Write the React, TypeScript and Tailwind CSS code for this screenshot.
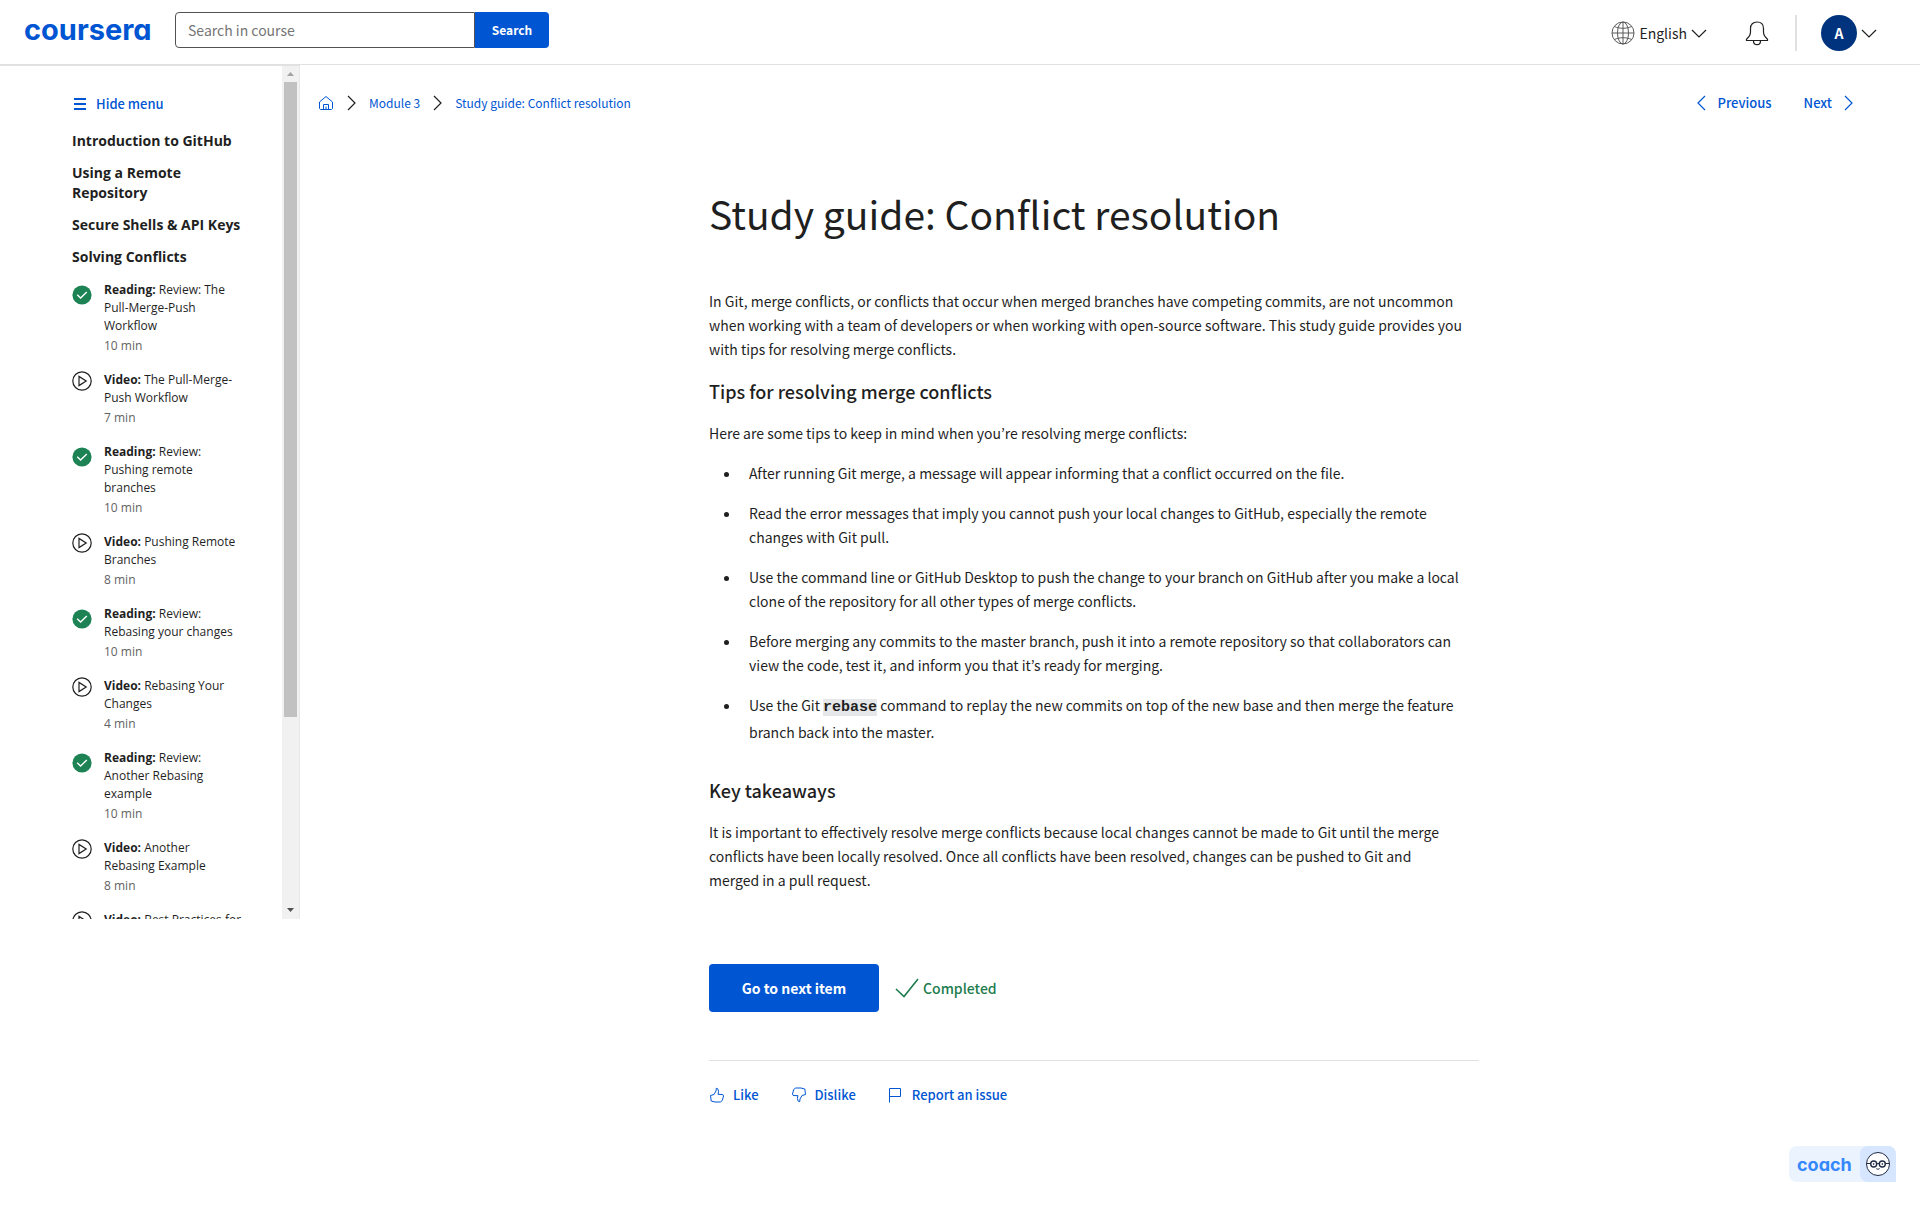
import React from "react";

const Chevron = ({ d, className }: { d: "left" | "right" | "down"; className?: string }) => {
  const paths = { left: "M8 2L1 9l7 7", right: "M1 2l7 7-7 7", down: "M1 1l7 7 7-7" };
  return (
    <svg
      width={d === "down" ? 16 : 9}
      height={d === "down" ? 9 : 18}
      viewBox={d === "down" ? "0 0 16 9" : "0 0 9 18"}
      fill="none"
      stroke="currentColor"
      strokeWidth="1.2"
      className={className}
      aria-hidden="true"
    >
      <path d={paths[d]} />
    </svg>
  );
};

type Item = { kind: "Reading" | "Video"; title: string; min: number };

const sections = ["Introduction to GitHub", "Using a Remote Repository", "Secure Shells & API Keys", "Solving Conflicts"];

const items: Item[] = [
  { kind: "Reading", title: "Review: The Pull-Merge-Push Workflow", min: 10 },
  { kind: "Video", title: "The Pull-Merge-Push Workflow", min: 7 },
  { kind: "Reading", title: "Review: Pushing remote branches", min: 10 },
  { kind: "Video", title: "Pushing Remote Branches", min: 8 },
  { kind: "Reading", title: "Review: Rebasing your changes", min: 10 },
  { kind: "Video", title: "Rebasing Your Changes", min: 4 },
  { kind: "Reading", title: "Review: Another Rebasing example", min: 10 },
  { kind: "Video", title: "Another Rebasing Example", min: 8 },
  { kind: "Video", title: "Best Practices for Collaboration", min: 5 },
];

const CheckCircle = () => (
  <svg width="20" height="20" viewBox="0 0 20 20" className="mt-1 shrink-0" aria-hidden="true">
    <circle cx="10" cy="10" r="9.6" fill="#1d8354" />
    <path d="M5.2 9.8l3.4 3.3 6.2-6.2" fill="none" stroke="#fff" strokeWidth="1.4" />
  </svg>
);

const PlayCircle = () => (
  <svg
    width="20"
    height="20"
    viewBox="0 0 20 20"
    className="shrink-0"
    fill="none"
    stroke="#1f1f1f"
    strokeWidth="1.2"
    aria-hidden="true"
  >
    <circle cx="10" cy="10" r="9.2" />
    <path d="M7 5.4v9.2l7.2-4.6z" />
  </svg>
);

const Header = () => (
  <header className="box-content flex h-16 items-center border-b border-[#e1e1e1] pr-[43px] pl-6">
    <div className="flex items-center pb-1">
      <a
        href="#"
        className="w-[127px] font-['Inter'] text-[29px] leading-8 font-bold text-[#0056d2] [font-feature-settings:'cv11']"
      >
        coursera
      </a>
      <form className="ml-6 flex h-9" onSubmit={(e) => e.preventDefault()}>
        <input
          aria-label="Search in course"
          placeholder="Search in course"
          className="w-[300px] rounded-l border border-[#525252] px-3 text-[14px] outline-none placeholder:text-[#757575]"
        />
        <button className="w-[74px] rounded-r bg-[#0056d2] text-[12px] font-bold text-white">Search</button>
      </form>
    </div>
    <div className="ml-auto flex items-center pt-0.5">
      <button className="flex items-center gap-1 text-[14px]">
        <svg width="24" height="24" viewBox="0 0 24 24" fill="none" stroke="#5a5a5a" aria-hidden="true">
          <circle cx="12" cy="12" r="11" />
          <ellipse cx="12" cy="12" rx="5.5" ry="11" />
          <path d="M1 12h22M12 1v22M3.5 5.5c5 2.4 12 2.4 17 0M3.5 18.500c5-2.400 12-2.400 17 0" />
        </svg>
        English
        <Chevron d="down" />
      </button>
      <button aria-label="Notifications" className="ml-[38px]">
        <svg width="24" height="26" viewBox="0 0 24 26" fill="none" stroke="#1f1f1f" strokeWidth="1.2" aria-hidden="true">
          <path d="M1.500 20.500v-1.300c2.500-2.200 4-4 4-7.200V8.500C5.500 4.500 8 2 12 2s6.500 2.500 6.500 6.500V12c0 3.200 1.500 5 4 7.200v1.300zM8.500 21c0 2.200 1.400 3.700 3.500 3.700s3.500-1.500 3.500-3.700" />
        </svg>
      </button>
      <div className="ml-[26px] h-9 w-0.5 bg-[#e1e1e1]" />
      <button className="ml-6 flex items-center gap-1" aria-label="Account">
        <span className="grid h-9 w-9 place-items-center rounded-full bg-[#00337d] text-[14px] font-bold text-white">A</span>
        <Chevron d="down" />
      </button>
    </div>
  </header>
);

const Sidebar = () => (
  <aside className="flex h-[854px] w-[300px] shrink-0 border-t border-r border-t-[#e1e1e1] border-r-[#e8e8e8]">
    <div className="flex-1 overflow-hidden pt-6 pl-[72px] font-['Open_Sans'] text-[#1f1f1f]">
      <button className="flex h-[27px] items-center gap-2 font-['Noto_Sans_CJK_JP'] text-[13px] font-medium text-[#0056d2]">
        <svg width="16" height="12" viewBox="0 0 16 12" stroke="#0056d2" strokeWidth="2" aria-hidden="true">
          <path d="M2 1h12M2 6h12M2 11h12" />
        </svg>
        Hide menu
      </button>
      <nav className="w-[170px] pt-[14px]">
        {sections.map((s) => (
          <h2 key={s} className="mb-3 text-[14px] leading-5 font-bold">
            {s}
          </h2>
        ))}
        <ul className="flex flex-col gap-4 pt-0.5">
          {items.map((it) => (
            <li key={it.title}>
              <a href="#" className="flex gap-3">
                {it.kind === "Reading" ? <CheckCircle /> : <PlayCircle />}
                <div className="text-[12px] leading-[18px]">
                  <p>
                    <b className="font-bold">{it.kind}:</b> {it.title}
                  </p>
                  <p className="pt-0.5 text-[#636363]">{it.min} min</p>
                </div>
              </a>
            </li>
          ))}
        </ul>
      </nav>
    </div>
    <div className="flex w-[17px] flex-col items-center bg-[#f1f1f1]">
      <svg width="17" height="16" viewBox="0 0 17 16" aria-hidden="true">
        <path d="M5 10h7l-3.500-4z" fill="#a3a3a3" />
      </svg>
      <div className="h-[635px] w-[13px] bg-[#c1c1c1]" />
      <svg width="17" height="17" viewBox="0 0 17 17" className="mt-auto" aria-hidden="true">
        <path d="M5 6h7l-3.500 4z" fill="#505050" />
      </svg>
    </div>
  </aside>
);

const tips: React.ReactNode[] = [
  "After running Git merge, a message will appear informing that a conflict occurred on the file.",
  "Read the error messages that imply you cannot push your local changes to GitHub, especially the remote changes with Git pull.",
  "Use the command line or GitHub Desktop to push the change to your branch on GitHub after you make a local clone of the repository for all other types of merge conflicts.",
  "Before merging any commits to the master branch, push it into a remote repository so that collaborators can view the code, test it, and inform you that it’s ready for merging.",
  <>
    Use the Git <code className="bg-[#e5e7e8] font-['Liberation_Mono'] text-[15px] font-bold">rebase</code> command to replay
    the new commits on top of the new base and then merge the feature branch back into the master.
  </>,
];

const thumb = "M1.500 8.500L5 7.500 7 4l.3-2.700 1.500.5.8 2.700-.6 2.800 4.800.2.700 1.500-1.200 4.500-2 1.500H6L2.200 14z";

const Article = () => (
  <article className="mx-auto w-full max-w-[770px]">
    <h1 className="pt-[74px] text-[39px] leading-[52px]">Study guide: Conflict resolution</h1>
    <p className="pt-[50px] text-[14px] leading-6">
      In Git, merge conflicts, or conflicts that occur when merged branches have competing commits, are not uncommon when
      working with a team of developers or when working with open-source software. This study guide provides you with tips
      for resolving merge conflicts.
    </p>
    <h2 className="pt-[18px] text-[18px] leading-6 font-medium">Tips for resolving merge conflicts</h2>
    <p className="pt-[18px] text-[14px] leading-6">
      Here are some tips to keep in mind when you’re resolving merge conflicts:
    </p>
    <ul className="flex list-disc flex-col gap-4 pt-4 pl-8 text-[14px] leading-6">
      {tips.map((t, i) => (
        <li key={i} className="pl-2">
          {t}
        </li>
      ))}
    </ul>
    <h2 className="pt-[34px] text-[18px] leading-6 font-medium">Key takeaways</h2>
    <p className="pt-[18px] pr-5 text-[14px] leading-6">
      It is important to effectively resolve merge conflicts because local changes cannot be made to Git until the merge
      conflicts have been locally resolved. Once all conflicts have been resolved, changes can be pushed to Git and merged
      in a pull request.
    </p>
    <div className="flex items-center gap-4 pt-[72px]">
      <button className="h-12 w-[170px] rounded bg-[#0056d2] text-[14px] font-bold text-white">Go to next item</button>
      <span className="flex items-center gap-1 text-[14px] font-medium text-[#1d7c4d]">
        <svg
          width="24"
          height="20"
          viewBox="0 0 24 20"
          fill="none"
          stroke="currentColor"
          strokeWidth="1.600"
          aria-hidden="true"
        >
          <path d="M1 11l8 7.500L23 1" />
        </svg>
        Completed
      </span>
    </div>
    <div className="mt-12 flex gap-8 border-t border-[#e1e1e1] pt-6 text-[13px] leading-5 font-medium text-[#0056d2]">
      <button className="flex items-center gap-2">
        <svg width="16" height="16" viewBox="0 0 16 16" fill="none" stroke="currentColor" aria-hidden="true">
          <path d={thumb} strokeLinejoin="round" />
        </svg>
        Like
      </button>
      <button className="flex items-center gap-2">
        <svg width="16" height="16" viewBox="0 0 16 16" fill="none" stroke="currentColor" aria-hidden="true">
          <path d={thumb} strokeLinejoin="round" transform="rotate(180 8 8)" />
        </svg>
        Dislike
      </button>
      <button className="flex items-center gap-2">
        <svg width="16" height="16" viewBox="0 0 16 16" fill="none" stroke="currentColor" aria-hidden="true">
          <path d="M1.500 15.500V1.500h11v8h-11" />
        </svg>
        Report an issue
      </button>
    </div>
  </article>
);

export default function App() {
  return (
    <div className="min-h-screen bg-white font-['Noto_Sans_CJK_JP','Noto_Sans',sans-serif] text-[#1f1f1f]">
      <Header />
      <div className="flex">
        <Sidebar />
        <main className="min-w-0 flex-1">
          <div className="flex items-center pt-7 pr-[67px] pl-[18px] text-[12px] leading-5 text-[#0056d2]">
            <nav aria-label="Breadcrumb" className="flex items-center gap-[13px]">
              <a href="#" aria-label="Home">
                <svg
                  width="16"
                  height="16"
                  viewBox="0 0 16 16"
                  fill="none"
                  stroke="currentColor"
                  strokeLinejoin="round"
                  aria-hidden="true"
                >
                  <path d="M1.500 7L8 1.500 14.500 7v6.500l-1 1h-11l-1-1zM5.500 14.500v-5h5v5M8 11.500v3" />
                </svg>
              </a>
              <Chevron d="right" className="text-[#1f1f1f]" />
              <a href="#">Module 3</a>
              <Chevron d="right" className="text-[#1f1f1f]" />
              <a href="#">Study guide: Conflict resolution</a>
            </nav>
            <div className="ml-auto flex gap-8 text-[13px] font-medium">
              <a href="#" className="flex items-center gap-3">
                <Chevron d="left" /> Previous
              </a>
              <a href="#" className="flex items-center gap-3">
                Next <Chevron d="right" />
              </a>
            </div>
          </div>
          <div className="pr-8">
            <Article />
          </div>
        </main>
      </div>
      <button className="fixed right-6 bottom-6 flex h-9 w-[107px] items-center rounded-lg rounded-br-none bg-[#ebf3ff] pl-2">
        <span className="font-['Inter'] text-[18px] font-bold text-[#3587fc] [font-feature-settings:'cv11']">coach</span>
        <span className="ml-auto grid h-9 w-9 place-items-center rounded-lg rounded-br-none bg-[#d6e6ff]">
          <svg width="26" height="26" viewBox="0 0 26 26" fill="none" stroke="#1f2a44" aria-hidden="true">
            <circle cx="13" cy="13" r="11.500" fill="#fff" />
            <circle cx="8.700" cy="13" r="3" strokeWidth="1.400" />
            <circle cx="17.300" cy="13" r="3" strokeWidth="1.400" />
            <path d="M11.700 12.600h2.600M2 12.500h3.700M20.300 12.500H24M11.300 17.600c1 .8 2.400.8 3.400 0" />
            <circle cx="8.700" cy="13" r=".5" />
            <circle cx="17.300" cy="13" r=".5" />
          </svg>
        </span>
      </button>
    </div>
  );
}
